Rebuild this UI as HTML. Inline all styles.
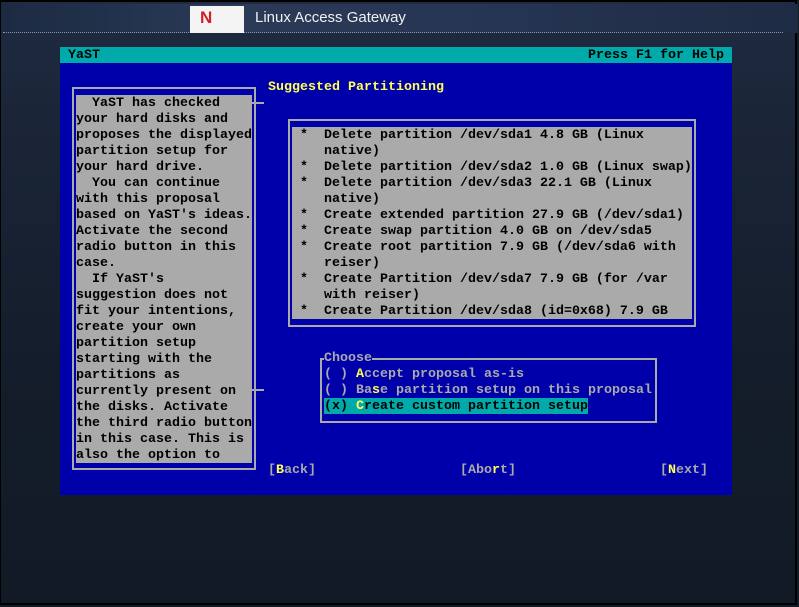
<!DOCTYPE html>
<html><head><meta charset="utf-8"><style>
html,body{margin:0;padding:0}
body{width:799px;height:607px;position:relative;overflow:hidden;background:#131b27;font-family:"Liberation Mono",monospace}
.frame{position:absolute;left:0;top:0;width:797px;height:605px;border-top:2px solid #000;border-left:1px solid #000;border-right:2px solid #000;border-bottom:2px solid #000;box-sizing:border-box;background:linear-gradient(180deg,#1e2b41 0%,#1a2537 20%,#141d2b 60%,#121a26 100%)}
.hdr{position:absolute;left:0;top:2px;width:797px;height:29px;background:linear-gradient(90deg,#1c2a42 0%,#2a3a57 30%,#263553 60%,#1e2b44 100%)}
.dots{position:absolute;left:2px;top:30px;width:780px;height:0;border-top:1px dotted #8895aa}
.logo{position:absolute;left:189px;top:4px;width:54px;height:27px;background:#f4f4f4}
.logo span{position:absolute;left:10px;top:2px;font:bold 17px "Liberation Sans",sans-serif;color:#d0202a}
.title{position:absolute;left:254px;top:7px;font:15px "Liberation Sans",sans-serif;color:#f0f0f0}
.term{position:absolute;left:60px;top:47px;width:672px;height:448px;background:#0000aa}
.t{position:absolute;font-size:13.33px;line-height:16px;white-space:pre;font-weight:bold;letter-spacing:0;padding-top:1px}
.g{color:#aaa}.k{color:#000}.y{color:#ffff55}
.bar{position:absolute;left:0;top:0;width:672px;height:16px;background:#00aaaa}
.box{position:absolute;border:2px solid #aaa;box-sizing:border-box}
.gray{position:absolute;background:#aaa}
</style></head><body>
<div class="frame">
<div class="hdr"></div>
<div class="dots"></div>
<div class="logo"><span>N</span></div>
<div class="title">Linux Access Gateway</div>
</div>
<div class="term">
<div class="bar"></div>
<div class="t k" style="left:8px;top:0">YaST</div>
<div class="t k" style="left:528px;top:0">Press F1 for Help</div>
<div class="t y" style="left:208px;top:32px">Suggested Partitioning</div>

<div class="box" style="left:12px;top:40px;width:184px;height:383px"></div>
<div class="gray" style="left:16px;top:48px;width:176px;height:368px"></div>
<div class="gray" style="left:192px;top:55px;width:12px;height:2px"></div>
<div class="gray" style="left:192px;top:342px;width:12px;height:2px"></div>
<div class="t k" style="left:16px;top:48px">  YaST has checked
your hard disks and
proposes the displayed
partition setup for
your hard drive.
  You can continue
with this proposal
based on YaST's ideas.
Activate the second
radio button in this
case.
  If YaST's
suggestion does not
fit your intentions,
create your own
partition setup
starting with the
partitions as
currently present on
the disks. Activate
the third radio button
in this case. This is
also the option to</div>

<div class="box" style="left:228px;top:72px;width:408px;height:208px"></div>
<div class="gray" style="left:232px;top:80px;width:400px;height:192px"></div>
<div class="t k" style="left:240px;top:80px">*  Delete partition /dev/sda1 4.8 GB (Linux
   native)
*  Delete partition /dev/sda2 1.0 GB (Linux swap)
*  Delete partition /dev/sda3 22.1 GB (Linux
   native)
*  Create extended partition 27.9 GB (/dev/sda1)
*  Create swap partition 4.0 GB on /dev/sda5
*  Create root partition 7.9 GB (/dev/sda6 with
   reiser)
*  Create Partition /dev/sda7 7.9 GB (for /var
   with reiser)
*  Create Partition /dev/sda8 (id=0x68) 7.9 GB</div>

<div class="box" style="left:260px;top:311px;width:337px;height:65px"></div>
<div class="t g" style="left:264px;top:303px;background:#0000aa">Choose</div>
<div class="t g" style="left:264px;top:319px">( ) <span class="y">A</span>ccept proposal as-is
( ) Ba<span class="y">s</span>e partition setup on this proposal</div>
<div class="t k" style="left:264px;top:351px;background:#00aaaa;padding-top:0;height:16px;line-height:17px">(x) <span class="y">C</span>reate custom partition setup</div>

<div class="t g" style="left:208px;top:415px">[<span class="y">B</span>ack]</div>
<div class="t g" style="left:400px;top:415px">[Abo<span class="y">r</span>t]</div>
<div class="t g" style="left:600px;top:415px">[<span class="y">N</span>ext]</div>
</div>
</body></html>
